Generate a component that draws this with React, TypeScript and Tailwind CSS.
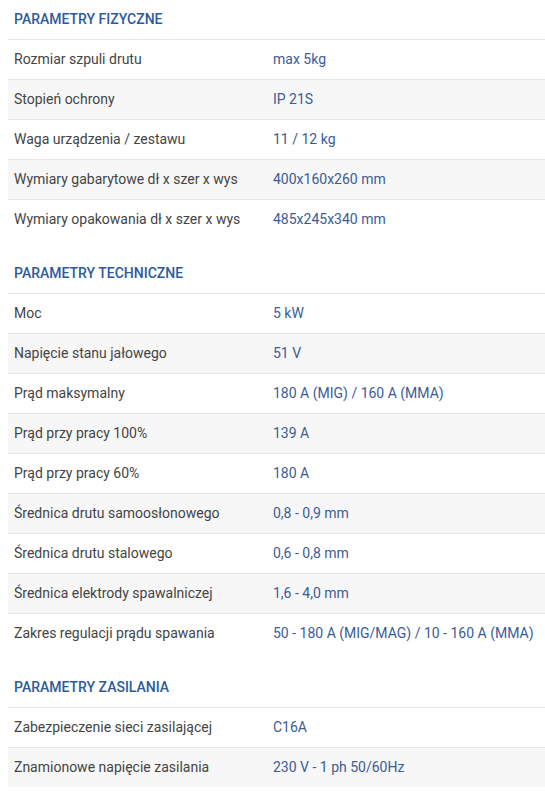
import React from 'react'

type Row = [string, string]

type Section = {
	title: string
	rows: Row[]
}

const sections: Section[] = [
	{
		title: 'Parametry fizyczne',
		rows: [
			['Rozmiar szpuli drutu', 'max 5kg'],
			['Stopień ochrony', 'IP 21S'],
			['Waga urządzenia / zestawu', '11 / 12 kg'],
			['Wymiary gabarytowe dł x szer x wys', '400x160x260 mm'],
			['Wymiary opakowania dł x szer x wys', '485x245x340 mm'],
		],
	},
	{
		title: 'Parametry techniczne',
		rows: [
			['Moc', '5 kW'],
			['Napięcie stanu jałowego', '51 V'],
			['Prąd maksymalny', '180 A (MIG) / 160 A (MMA)'],
			['Prąd przy pracy 100%', '139 A'],
			['Prąd przy pracy 60%', '180 A'],
			['Średnica drutu samoosłonowego', '0,8 - 0,9 mm'],
			['Średnica drutu stalowego', '0,6 - 0,8 mm'],
			['Średnica elektrody spawalniczej', '1,6 - 4,0 mm'],
			['Zakres regulacji prądu spawania', '50 - 180 A (MIG/MAG) / 10 - 160 A (MMA)'],
		],
	},
	{
		title: 'Parametry zasilania',
		rows: [
			['Zabezpieczenie sieci zasilającej', 'C16A'],
			['Znamionowe napięcie zasilania', '230 V - 1 ph 50/60Hz'],
		],
	},
]

const App = () => {
	return (
		<div className="w-[545px] min-h-[791px] bg-white pl-2 font-['Roboto',sans-serif] text-[14px]">
			{sections.map((section, i) => (
				<div key={section.title} className={i > 0 ? 'mt-[15px]' : ''}>
					<h3 className="h-[39px] flex items-center px-[6px] uppercase font-medium text-[#2e5a9c]">
						{section.title}
					</h3>

					{section.rows.map((row, j) => (
						<div
							key={row[0]}
							className={`grid grid-cols-[259px_1fr] h-10 items-center border-t border-[#e6e6e6] ${j % 2 === 1 ? 'bg-[#f7f7f7]' : 'bg-white'}`}
						>
							<div className="px-[6px] text-[#444444]">{row[0]}</div>
							<div className="px-[6px] text-[#3b5c98] whitespace-nowrap">{row[1]}</div>
						</div>
					))}
				</div>
			))}
		</div>
	)
}

export default App
